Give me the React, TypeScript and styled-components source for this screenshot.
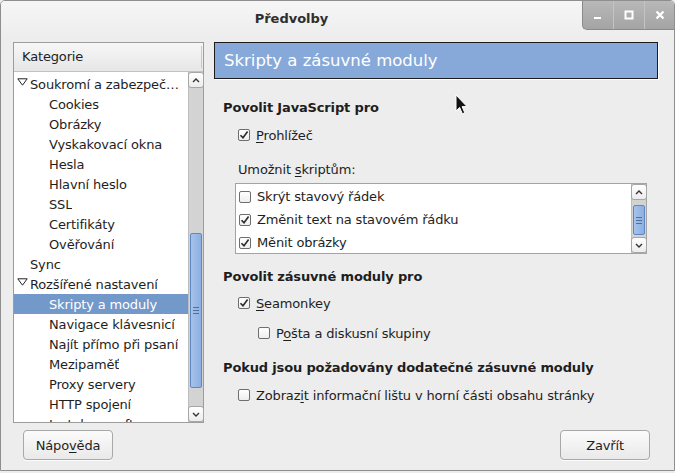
import React from 'react';
import styled, { createGlobalStyle } from 'styled-components';

const GlobalStyle = createGlobalStyle`
  html, body {
    margin: 0;
    padding: 0;
    background: #ededed;
  }
  body {
    font-family: "DejaVu Sans", "Noto Sans", sans-serif;
    font-size: 13px;
    letter-spacing: -0.15px;
    color: #1e1e1e;
  }
`;

const treeItems = [
  { label: 'Soukromí a zabezpečení', level: 0, twisty: true },
  { label: 'Cookies', level: 1 },
  { label: 'Obrázky', level: 1 },
  { label: 'Vyskakovací okna', level: 1 },
  { label: 'Hesla', level: 1 },
  { label: 'Hlavní heslo', level: 1 },
  { label: 'SSL', level: 1 },
  { label: 'Certifikáty', level: 1 },
  { label: 'Ověřování', level: 1 },
  { label: 'Sync', level: 0 },
  { label: 'Rozšířené nastavení', level: 0, twisty: true },
  { label: 'Skripty a moduly', level: 1, selected: true },
  { label: 'Navigace klávesnicí', level: 1 },
  { label: 'Najít přímo při psaní', level: 1 },
  { label: 'Mezipaměť', level: 1 },
  { label: 'Proxy servery', level: 1 },
  { label: 'HTTP spojení', level: 1 },
  { label: 'Instalace softwaru', level: 1 },
];

const scriptOptions = [
  { label: 'Skrýt stavový řádek', checked: false },
  { label: 'Změnit text na stavovém řádku', checked: true },
  { label: 'Měnit obrázky', checked: true },
];

function CheckMark() {
  return (
    <svg width="10" height="10" viewBox="0 0 10 10">
      <path d="M1.5 5.2 L4 7.8 L8.6 1.6" fill="none" stroke="#2a2a2a" strokeWidth="1.6" />
    </svg>
  );
}

function CheckBox({ checked }) {
  return <Box>{checked && <CheckMark />}</Box>;
}

function Twisty() {
  return (
    <TwistyWrap>
      <svg width="11" height="8" viewBox="0 0 11 8">
        <path d="M0.8 0.8 H10.2 L5.5 7.2 Z" fill="none" stroke="#222" strokeWidth="1" />
      </svg>
    </TwistyWrap>
  );
}

function Caret({ down }) {
  return (
    <svg width="8" height="5" viewBox="0 0 8 5">
      <path
        d={down ? 'M1 1 L4 4 L7 1' : 'M1 4 L4 1 L7 4'}
        fill="none"
        stroke="#333"
        strokeWidth="1.4"
      />
    </svg>
  );
}

// Scrollbar with arrow buttons; the thumb offset is given in px from the track top.
function ScrollBar({ thumbTop, thumbHeight }) {
  return (
    <ScrollBarWrap>
      <ArrowButton>
        <Caret />
      </ArrowButton>
      <Track>
        <Thumb style={{ marginTop: thumbTop, height: thumbHeight }}>
          <Grip />
        </Thumb>
      </Track>
      <ArrowButton>
        <Caret down />
      </ArrowButton>
    </ScrollBarWrap>
  );
}

// Label with the access-key letter underlined.
function Mnemonic({ text, at }) {
  return (
    <span>
      {text.slice(0, at)}
      <u>{text[at]}</u>
      {text.slice(at + 1)}
    </span>
  );
}

function WindowControls() {
  return (
    <Controls>
      <ControlButton>
        <svg width="10" height="10" viewBox="0 0 10 10">
          <rect x="1" y="7" width="7" height="2" fill="#fff" />
        </svg>
      </ControlButton>
      <ControlButton>
        <svg width="10" height="10" viewBox="0 0 10 10">
          <rect x="1.5" y="1.5" width="7" height="7" fill="none" stroke="#fff" strokeWidth="2" />
        </svg>
      </ControlButton>
      <ControlButton>
        <svg width="10" height="10" viewBox="0 0 10 10">
          <path d="M1.5 1.5 L8.5 8.5 M8.5 1.5 L1.5 8.5" stroke="#fff" strokeWidth="2.2" />
        </svg>
      </ControlButton>
    </Controls>
  );
}

function CategoryTree() {
  return (
    <CategoryPanel>
      <ColumnHeader>
        Kategorie
        <HeaderSeparator />
      </ColumnHeader>
      <TreeBody>
        <TreeList>
          {treeItems.map((item) => (
            <TreeRow key={item.label} level={item.level} selected={item.selected}>
              {item.twisty && <Twisty />}
              <TreeLabel>{item.label}</TreeLabel>
            </TreeRow>
          ))}
        </TreeList>
        <ScrollBar thumbTop={145} thumbHeight={155} />
      </TreeBody>
    </CategoryPanel>
  );
}

function ScriptsPane() {
  return (
    <ContentPanel>
      <PaneTitle>Skripty a zásuvné moduly</PaneTitle>

      <GroupHeading top={19}>Povolit JavaScript pro</GroupHeading>
      <CheckRow top={7} indent={24}>
        <CheckBox checked />
        <Mnemonic text="Prohlížeč" at={0} />
      </CheckRow>

      <FieldLabel>
        <Mnemonic text="Umožnit skriptům:" at={8} />
      </FieldLabel>
      <ListBox>
        <ListRows>
          {scriptOptions.map((opt) => (
            <ListRow key={opt.label}>
              <CheckBox checked={opt.checked} />
              {opt.label}
            </ListRow>
          ))}
        </ListRows>
        <ScrollBar thumbTop={5} thumbHeight={30} />
      </ListBox>

      <GroupHeading top={13}>Povolit zásuvné moduly pro</GroupHeading>
      <CheckRow top={6} indent={24}>
        <CheckBox checked />
        <Mnemonic text="Seamonkey" at={0} />
      </CheckRow>
      <CheckRow top={10} indent={44}>
        <CheckBox />
        <Mnemonic text="Pošta a diskusní skupiny" at={1} />
      </CheckRow>

      <GroupHeading top={15}>Pokud jsou požadovány dodatečné zásuvné moduly</GroupHeading>
      <CheckRow top={7} indent={24}>
        <CheckBox />
        <Mnemonic text="Zobrazit informační lištu v horní části obsahu stránky" at={6} />
      </CheckRow>
    </ContentPanel>
  );
}

function MouseCursor() {
  return (
    <Cursor width="14" height="22" viewBox="0 0 14 22">
      <path
        d="M1 1 L1 17 L4.6 13.4 L7.4 19.8 L9.8 18.8 L7.1 12.6 L12 12.6 Z"
        fill="#111"
        stroke="#fff"
        strokeWidth="1"
      />
    </Cursor>
  );
}

export default function App() {
  return (
    <React.Fragment>
      <GlobalStyle />
      <Window>
        <TitleBar>
          <Title>Předvolby</Title>
          <WindowControls />
        </TitleBar>
        <Body>
          <CategoryTree />
          <ScriptsPane />
        </Body>
        <Footer>
          <PushButton>
            <Mnemonic text="Nápověda" at={4} />
          </PushButton>
          <PushButton>Zavřít</PushButton>
        </Footer>
        <MouseCursor />
      </Window>
    </React.Fragment>
  );
}

const Window = styled.div`
  position: relative;
  width: 675px;
  height: 471px;
  box-sizing: border-box;
  border: 1px solid #8e8e8e;
  border-radius: 5px 5px 0 0;
  background: #ededed;
  display: flex;
  flex-direction: column;
  overflow: hidden;
`;

const TitleBar = styled.div`
  display: flex;
  height: 37px;
  background: linear-gradient(#f6f6f6, #ededed);
`;

const Title = styled.div`
  flex: 1;
  text-align: center;
  line-height: 35px;
  font-weight: bold;
  font-size: 13px;
  letter-spacing: 0;
  color: #2e2e2e;
`;

const Controls = styled.div`
  display: flex;
  height: 29px;
  margin-top: -1px;
  margin-right: -1px;
  border-left: 1px solid #8a8a8a;
  border-bottom: 1px solid #8a8a8a;
  border-bottom-left-radius: 5px;
  background: linear-gradient(#b9b9b9, #a4a4a4);
  overflow: hidden;
`;

const ControlButton = styled.div`
  width: 30px;
  display: flex;
  align-items: center;
  justify-content: center;
  border-left: 1px solid #c4c4c4;
  &:first-child {
    border-left: none;
  }
`;

const Body = styled.div`
  display: flex;
  gap: 10px;
  padding: 4px 16px 0 12px;
`;

const CategoryPanel = styled.div`
  width: 189px;
  height: 379px;
  border: 1px solid #9c9c9c;
  background: #fff;
  display: flex;
  flex-direction: column;
`;

const ColumnHeader = styled.div`
  position: relative;
  height: 28px;
  line-height: 28px;
  padding-left: 8px;
  border-bottom: 1px solid #c2c2c2;
  background: linear-gradient(#f7f7f7, #e6e6e6);
  color: #222;
`;

const HeaderSeparator = styled.div`
  position: absolute;
  right: 1px;
  top: 3px;
  bottom: 3px;
  width: 1px;
  background: #c8c8c8;
`;

const TreeBody = styled.div`
  flex: 1;
  display: flex;
  min-height: 0;
`;

const TreeList = styled.div`
  flex: 1;
  min-width: 0;
  padding-top: 2px;
  overflow: hidden;
`;

const TreeRow = styled.div`
  display: flex;
  align-items: center;
  height: 20px;
  padding-left: ${(p) => (p.level === 0 ? 16 : 35)}px;
  padding-right: 4px;
  background: ${(p) => (p.selected ? '#7398ca' : 'transparent')};
  color: ${(p) => (p.selected ? '#fff' : '#1e1e1e')};
`;

const TwistyWrap = styled.span`
  display: flex;
  margin-left: -13px;
  margin-right: 2px;
  margin-top: -4px;
`;

const TreeLabel = styled.span`
  white-space: nowrap;
  overflow: hidden;
  text-overflow: ellipsis;
`;

const ScrollBarWrap = styled.div`
  width: 14px;
  display: flex;
  flex-direction: column;
  background: #d3d3d3;
  border-left: 1px solid #bdbdbd;
`;

const ArrowButton = styled.div`
  height: 14px;
  display: flex;
  align-items: center;
  justify-content: center;
  background: linear-gradient(#ffffff, #ececec);
  border: 1px solid #a6a6a6;
  border-radius: 3px;
  margin: 0 -1px 0 -1px;
`;

const Track = styled.div`
  flex: 1;
  display: flex;
  flex-direction: column;
  padding: 0 1px;
`;

const Thumb = styled.div`
  box-sizing: border-box;
  border: 1px solid #5f87c0;
  border-radius: 2px;
  background: linear-gradient(90deg, #a5c2ea, #8cb0e2);
  display: flex;
  align-items: center;
  justify-content: center;
`;

const Grip = styled.div`
  width: 6px;
  height: 7px;
  background: repeating-linear-gradient(#4f6f9c 0 1px, transparent 1px 3px);
`;

const ContentPanel = styled.div`
  flex: 1;
  display: flex;
  flex-direction: column;
`;

const PaneTitle = styled.div`
  height: 35px;
  line-height: 35px;
  padding-left: 9px;
  border: 1px solid #1c1c1c;
  box-shadow: 1px 1px 0 #ffffff;
  background: #87a9d9;
  color: #fff;
  font-size: 16.5px;
  letter-spacing: 0;
`;

const GroupHeading = styled.div`
  margin-top: ${(p) => p.top}px;
  padding-left: 9px;
  line-height: 20px;
  font-weight: bold;
  color: #1e1e1e;
`;

const CheckRow = styled.div`
  display: flex;
  align-items: center;
  gap: 6px;
  height: 20px;
  margin-top: ${(p) => p.top}px;
  padding-left: ${(p) => p.indent}px;
  u {
    text-underline-offset: 2px;
  }
`;

const FieldLabel = styled.div`
  margin-top: 15px;
  padding-left: 24px;
  line-height: 20px;
  u {
    text-underline-offset: 2px;
  }
`;

const ListBox = styled.div`
  display: flex;
  margin: 3px 11px 0 21px;
  height: 69px;
  border: 1px solid #a3a3a3;
  background: #fff;
`;

const ListRows = styled.div`
  flex: 1;
  padding-top: 1px;
`;

const ListRow = styled.div`
  display: flex;
  align-items: center;
  gap: 6px;
  height: 23px;
  padding-left: 3px;
`;

const Box = styled.span`
  box-sizing: border-box;
  width: 12px;
  height: 12px;
  flex: none;
  border: 1px solid #6e6e6e;
  border-radius: 2px;
  background: linear-gradient(#ffffff, #eeeeee);
  display: flex;
  align-items: center;
  justify-content: center;
`;

const Footer = styled.div`
  display: flex;
  justify-content: space-between;
  padding: 7px 24px 0 22px;
`;

const PushButton = styled.div`
  box-sizing: border-box;
  width: 90px;
  height: 30px;
  display: flex;
  align-items: center;
  justify-content: center;
  border: 1px solid #a8a8a8;
  border-radius: 4px;
  background: linear-gradient(#fbfbfb, #e9e9e9);
  box-shadow: 0 1px 0 rgba(255, 255, 255, 0.8);
  color: #1e1e1e;
  u {
    text-underline-offset: 2px;
  }
`;

const Cursor = styled.svg`
  position: absolute;
  left: 454px;
  top: 93px;
`;
